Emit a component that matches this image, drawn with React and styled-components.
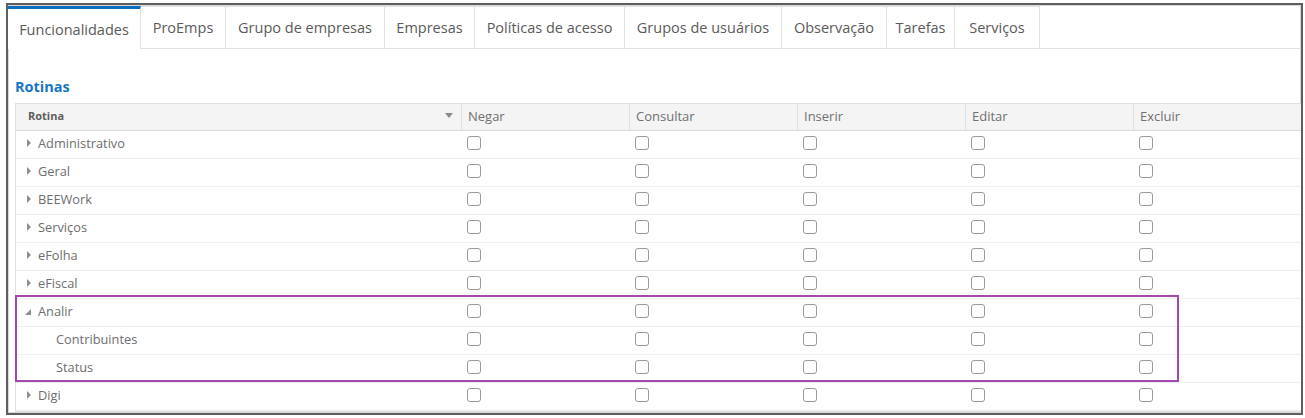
import React from 'react';
import styled, { createGlobalStyle } from 'styled-components';

const GlobalStyle = createGlobalStyle`
  html, body {
    margin: 0;
    padding: 0;
    background: #fff;
    font-family: "Open Sans", "Noto Sans", sans-serif;
  }
`;

const Frame = styled.div`
  box-sizing: border-box;
  margin: 3px 2px 0 6px;
  width: 1297px;
  height: 412px;
  border: 2px solid #5f5f5f;
  box-shadow: inset 0 0 0 1px #d8d8d8;
  overflow: hidden;
  display: flex;
  flex-direction: column;
`;

const TabBar = styled.div`
  display: flex;
  height: 42px;
  border-bottom: 1px solid #e2e2e2;
  margin-top: 1px;
`;

const Tab = styled.div`
  box-sizing: border-box;
  display: flex;
  align-items: center;
  justify-content: center;
  width: ${p => p.$w}px;
  font-size: 14.5px;
  color: #5a5a5a;
  background: #fff;
  border-top: ${p => (p.$active ? '3px solid #0b6fbf' : '1px solid #e2e2e2')};
  border-right: 1px solid #e2e2e2;
  margin-bottom: ${p => (p.$active ? '-1px' : '0')};
  padding-top: ${p => (p.$active ? '1px' : '0')};
  white-space: nowrap;
`;

const Content = styled.div`
  padding: 29px 0 0 7px;
`;

const Heading = styled.h2`
  margin: 0 0 7px 0;
  font-size: 14.5px;
  font-weight: 700;
  color: #1677c4;
  line-height: 18px;
`;

const Grid = styled.div`
  position: relative;
  border-left: 1px solid #e0e0e0;
  border-bottom: 1px solid #e0e0e0;
`;

const Row = styled.div`
  display: grid;
  grid-template-columns: 446px repeat(5, 168px);
  height: 28px;
  box-sizing: border-box;
  border-bottom: 1px solid ${p => (p.$head ? '#dcdcdc' : '#efefef')};
  border-top: ${p => (p.$head ? '1px solid #e0e0e0' : 'none')};
  background: ${p => (p.$head ? '#f4f4f4' : '#fff')};
  &:last-child {
    border-bottom: none;
  }
`;

const HeadCell = styled.div`
  display: flex;
  align-items: center;
  justify-content: space-between;
  padding: 0 6px 3px ${p => (p.$first ? '12px' : '6px')};
  font-size: ${p => (p.$first ? '11px' : '13px')};
  font-weight: ${p => (p.$first ? 700 : 400)};
  color: ${p => (p.$first ? '#5d5d5d' : '#707070')};
  border-right: 1px solid #e0e0e0;
`;

const FilterIcon = styled.span`
  width: 0;
  height: 0;
  border-left: 4px solid transparent;
  border-right: 4px solid transparent;
  border-top: 5px solid #8a8a8a;
  margin-right: 2px;
`;

const NameCell = styled.div`
  display: flex;
  align-items: center;
  padding-left: ${p => (p.$child ? '40px' : '9px')};
  padding-bottom: 4px;
  font-size: 12.8px;
  color: #6e6e6e;
`;

const Arrow = styled.span`
  width: 0;
  height: 0;
  margin-right: 7px;
  ${p =>
    p.$open
      ? `border-left: 6px solid transparent; border-bottom: 6px solid #8d8d8d; margin-top: 2px;`
      : `border-top: 4px solid transparent; border-bottom: 4px solid transparent; border-left: 4px solid #8d8d8d; margin-left: 2px;`}
`;

const BoxCell = styled.div`
  display: flex;
  align-items: center;
  padding-left: 5px;
  padding-bottom: 4px;
`;

const Check = styled.span`
  box-sizing: border-box;
  width: 14px;
  height: 14px;
  border: 1px solid #9a9a9a;
  border-radius: 3px;
  background: #fff;
`;

const Highlight = styled.div`
  position: absolute;
  left: -1px;
  top: ${p => p.$top}px;
  width: 1164px;
  height: 87px;
  box-sizing: border-box;
  border: 2px solid #a647ad;
  pointer-events: none;
`;

const tabs = [
  ['Funcionalidades', 133],
  ['ProEmps', 85],
  ['Grupo de empresas', 159],
  ['Empresas', 90],
  ['Políticas de acesso', 150],
  ['Grupos de usuários', 157],
  ['Observação', 105],
  ['Tarefas', 68],
  ['Serviços', 85],
];

const cols = ['Negar', 'Consultar', 'Inserir', 'Editar', 'Excluir'];

const rows = [
  { name: 'Administrativo' },
  { name: 'Geral' },
  { name: 'BEEWork' },
  { name: 'Serviços' },
  { name: 'eFolha' },
  { name: 'eFiscal' },
  { name: 'Analir', open: true },
  { name: 'Contribuintes', child: true },
  { name: 'Status', child: true },
  { name: 'Digi' },
];

export default function App() {
  return (
    <>
      <GlobalStyle />
      <Frame>
        <TabBar>
          {tabs.map(([t, w], i) => (
            <Tab key={t} $active={i === 0} $w={w}>
              {t}
            </Tab>
          ))}
        </TabBar>
        <Content>
          <Heading>Rotinas</Heading>
          <Grid>
            <Row $head>
              <HeadCell $first>
                Rotina
                <FilterIcon />
              </HeadCell>
              {cols.map(c => (
                <HeadCell key={c}>{c}</HeadCell>
              ))}
            </Row>
            {rows.map(r => (
              <Row key={r.name}>
                <NameCell $child={r.child}>
                  {!r.child && <Arrow $open={r.open} />}
                  {r.name}
                </NameCell>
                {cols.map(c => (
                  <BoxCell key={c}>
                    <Check />
                  </BoxCell>
                ))}
              </Row>
            ))}
            <Highlight $top={192} />
          </Grid>
        </Content>
      </Frame>
    </>
  );
}
